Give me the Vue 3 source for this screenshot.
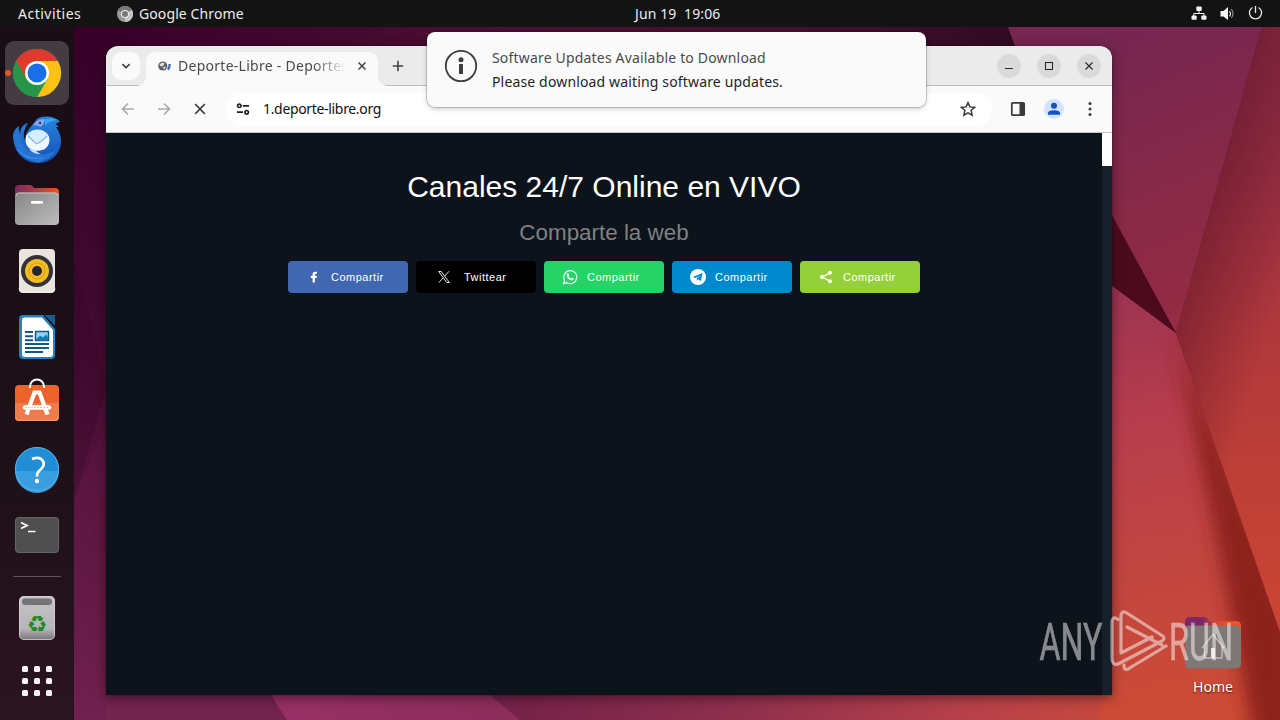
<script setup>
const shares = [
  { id: 'facebook', label: 'Compartir' },
  { id: 'x', label: 'Twittear' },
  { id: 'whatsapp', label: 'Compartir' },
  { id: 'telegram', label: 'Compartir' },
  { id: 'sharethis', label: 'Compartir' }
]
const dots = [20, 32, 44]
</script>

<template>
  <div class="desktop">
    <svg class="wallpaper" viewBox="0 0 1280 720" aria-hidden="true">
      <defs>
        <linearGradient id="wBase" x1="0" y1="0" x2="0" y2="1">
          <stop offset="0" stop-color="#340028" /><stop offset=".45" stop-color="#410a30" /><stop offset=".8" stop-color="#5f1a42" /><stop offset="1" stop-color="#752450" />
        </linearGradient>
        <linearGradient id="wTop" x1="0" y1="0" x2="1" y2="0">
          <stop offset="0" stop-color="#370029" /><stop offset=".45" stop-color="#4d0e34" /><stop offset=".8" stop-color="#43102f" /><stop offset="1" stop-color="#300a20" />
        </linearGradient>
        <linearGradient id="wRight" gradientUnits="userSpaceOnUse" x1="1080" y1="60" x2="1200" y2="340">
          <stop offset="0" stop-color="#762650" /><stop offset=".5" stop-color="#872947" /><stop offset="1" stop-color="#982b43" />
        </linearGradient>
        <linearGradient id="wEdge" gradientUnits="userSpaceOnUse" x1="0" y1="27" x2="0" y2="600">
          <stop offset="0" stop-color="#8f2e48" /><stop offset=".25" stop-color="#9a3044" /><stop offset=".55" stop-color="#b2393b" /><stop offset="1" stop-color="#c84433" />
        </linearGradient>
        <linearGradient id="wShade" gradientUnits="userSpaceOnUse" x1="1176" y1="333" x2="1262" y2="357">
          <stop offset="0" stop-color="#5a1226" stop-opacity=".5" /><stop offset="1" stop-color="#5a1226" stop-opacity="0" />
        </linearGradient>
        <linearGradient id="wLow" gradientUnits="userSpaceOnUse" x1="1120" y1="300" x2="1190" y2="700">
          <stop offset="0" stop-color="#9e3450" /><stop offset=".3" stop-color="#b73d4d" /><stop offset=".65" stop-color="#c14540" /><stop offset="1" stop-color="#cc4b36" />
        </linearGradient>
        <filter id="soft" x="-50%" y="-20%" width="200%" height="140%"><feGaussianBlur stdDeviation="9" /></filter>
        <linearGradient id="wBottom" x1="0" y1="0" x2="1" y2="0">
          <stop offset="0" stop-color="#732147" /><stop offset=".35" stop-color="#8e2f4d" /><stop offset=".7" stop-color="#b84149" /><stop offset="1" stop-color="#cc4b38" />
        </linearGradient>
        <linearGradient id="wPink" x1="0" y1="0" x2="1" y2="0">
          <stop offset="0" stop-color="#993166" /><stop offset="1" stop-color="#8d2d5a" />
        </linearGradient>
      </defs>
      <rect width="1280" height="720" fill="url(#wBase)" />
      <rect x="74" y="27" width="950" height="30" fill="url(#wTop)" />
      <path d="M74 260L106 380V420L74 500z" fill="#2a0120" opacity=".2" />
      <path d="M106 390L74 500V720H106z" fill="#6a1c4c" opacity=".3" />
      <path d="M490 690H1176V720H520z" fill="url(#wBottom)" />
      <path d="M268 690H484L520 720H287z" fill="url(#wPink)" />
      <path d="M1100 275L1176 333L1280 632V720H1100z" fill="url(#wLow)" />
      <path d="M1174 333L1300 632V760H1258L1215 530z" fill="#8d221d" filter="url(#soft)" />
      <path d="M1008 27H1262L1176 333L1020 60z" fill="url(#wRight)" />
      <path d="M1262 27H1280V632L1176 333z" fill="url(#wEdge)" />
      <path d="M1262 27H1280V632L1176 333z" fill="url(#wShade)" />
      <path d="M1100 193L1176 333L1100 277z" fill="#4b0b1d" />
    </svg>

    <header class="topbar">
      <span class="activities">Activities</span>
      <svg class="app-mark" viewBox="0 0 16 16"><circle cx="8" cy="8" r="8" fill="#989898" /><path d="M8 8L1 4A8 8 0 0 1 15 4z" fill="#777" /><path d="M8 8L15 4A8 8 0 0 1 8 16z" fill="#c4c4c4" /><circle cx="8" cy="8" r="4" fill="#eee" /><circle cx="8" cy="8" r="3" fill="#777" /></svg>
      <span class="appname">Google Chrome</span>
      <span class="clock">Jun 19&nbsp; 19:06</span>
      <div class="tray">
        <svg width="16" height="16" viewBox="0 0 16 16" fill="#f2f2f2"><rect x="5.300" y=".5" width="5.400" height="4.500" rx="1" /><rect x=".5" y="9.500" width="5.200" height="4.300" rx="1" /><rect x="10.300" y="9.500" width="5.200" height="4.300" rx="1" /><path d="M8 5v2.500M2.800 10V7.500h10.200V10" fill="none" stroke="#f2f2f2" stroke-width="1" /></svg>
        <svg width="16" height="16" viewBox="0 0 16 16"><path d="M1.500 5h3L9 1v13L4.500 10.500h-3z" fill="#f2f2f2" /><path d="M10.500 5q2 2.700 0 5.400" fill="none" stroke="#ddd" stroke-width="1.200" /><path d="M12.300 3q3.400 4.500 0 9" fill="none" stroke="#888" stroke-width="1.200" /></svg>
        <svg width="16" height="16" viewBox="0 0 16 16" fill="none" stroke="#e8e8e8" stroke-width="1.300"><path d="M5.500 1.500a6.100 6.100 0 1 0 6 0M8.500 0v7" /></svg>
      </div>
    </header>

    <nav class="dock">
      <div class="slot active"><i class="running"></i>
        <svg viewBox="0 0 64 64"><circle cx="32" cy="32" r="24" fill="#34a853" /><path d="M32 32L11.200 20A24 24 0 0 1 52.800 20z" fill="#e03a2c" /><path d="M32 20H52.800A24 24 0 0 1 32 56L42.400 38z" fill="#fbc116" /><path d="M11.200 20A24 24 0 0 0 32 56L42.400 38H21.600z" fill="#279447" /><path d="M11.200 20L21.600 38L32 20z" fill="#e03a2c" /><circle cx="32" cy="32" r="12" fill="#fff" /><circle cx="32" cy="32" r="9.500" fill="#1a6fe8" /></svg>
      </div>
      <div class="slot">
        <svg viewBox="0 0 64 64"><defs><linearGradient id="tb" x1="0" y1="0" x2="0" y2="1"><stop offset="0" stop-color="#2486dc" /><stop offset="1" stop-color="#1550ba" /></linearGradient></defs><path d="M8 28C8 43 17 56 33 56C47 56 56 46 56 34C56 29 54 24 51 20L54 20L50.500 17L55 14.500C49 9 39 8 32 12L24 22Q19 28 21 35C17 29 19 22 23 16C18 17 15 22 15 27C13 25 14 22 14 19Q9 22 8 28z" fill="url(#tb)" /><path d="M8.500 30Q11 52 33 55.500Q46 53 51 43Q40 50 28 46Q16 42 14 22Q9 24 8.500 30z" fill="#2573d4" /><path d="M12 42Q22 54 38 51" fill="none" stroke="#3f93ea" stroke-width="1.500" opacity=".7" /><path d="M28 18Q33 11.500 40 12.500Q39 17 36 20Q32 18 28 18z" fill="#8ea4ec" /><path d="M40 12.500Q46 10.500 52 13Q43 14 40 19z" fill="#3aa5ee" /><ellipse cx="32.500" cy="33" rx="12" ry="10.500" fill="#d6efff" /><path d="M21 28L32 36Q38 36 44 29V36Q42 43.500 33 43.500Q21 43 21 34z" fill="#f0f8ff" /><path d="M23 29L31 36.500Q34 37 42 29" fill="none" stroke="#8fb9dc" stroke-width="1.200" /><path d="M24 42Q28 47.500 36 47Q31 45 31 43z" fill="#c1e6fa" /><circle cx="35" cy="16" r="1.200" fill="#10377a" /></svg>
      </div>
      <div class="slot">
        <svg viewBox="0 0 64 64"><defs><linearGradient id="ff" x1="0" x2="1"><stop offset="0" stop-color="#782a62" /><stop offset="1" stop-color="#e95420" /></linearGradient><linearGradient id="fg" x1="0" y1="0" x2="1" y2="1"><stop offset="0" stop-color="#868686" /><stop offset="1" stop-color="#bdbdbd" /></linearGradient></defs><path d="M10 16Q10 12 14 12H25Q27 12 29 15H50Q54 15 54 19V34H10z" fill="url(#ff)" /><rect x="10" y="19.500" width="44" height="32.500" rx="4" fill="url(#fg)" /><path d="M11 23Q11 20 14 20H50Q53 20 53 23" fill="none" stroke="#c1c1c1" /><rect x="26" y="28" width="12" height="2.800" rx=".8" fill="#fff" /></svg>
      </div>
      <div class="slot">
        <svg viewBox="0 0 64 64"><rect x="14" y="10" width="36" height="44" rx="4" fill="#e9e4de" /><path d="M14 49.500Q14 53 18 53H46Q50 53 50 49.500" fill="none" stroke="#f6f3ef" stroke-width="1" /><circle cx="32" cy="32" r="16" fill="#343238" /><circle cx="32" cy="32" r="12" fill="#f2bd22" /><circle cx="32" cy="32" r="8" fill="none" stroke="#d99e12" /><circle cx="32" cy="32" r="5" fill="#25262d" /></svg>
      </div>
      <div class="slot">
        <svg viewBox="0 0 64 64"><path d="M18 10H38L50 24V50Q50 54 46 54H18Q14 54 14 50V14Q14 10 18 10z" fill="#2b80ba" /><path d="M39.500 10H50V21z" fill="#1c5c8f" /><path d="M19 12.500H37L48 25V49Q48 52 45 52H20Q17 52 17 49V15Q17 12.500 19 12.500z" fill="#fff" /><path d="M20 27h8M20 31.300h8M20 35.300h8M20 39h24M20 43h24M20 47h18" stroke="#155685" stroke-width="2" /><rect x="30.500" y="26.500" width="13" height="9" fill="#93d2ef" stroke="#155685" stroke-width="1.500" /><path d="M31 34.500l4-4 3 2 3-3 2 3v3H31z" fill="#187bb3" /></svg>
      </div>
      <div class="slot">
        <svg viewBox="0 0 64 64"><rect x="10" y="14" width="44" height="36" rx="4" fill="#ee622c" /><path d="M10 32H54V46Q54 50 50 50H14Q10 50 10 46z" fill="#f07a4a" /><path d="M11 46Q11 49.300 14 49.300H50Q53 49.300 53 46" fill="none" stroke="#f99a70" /><path d="M25 17V15.500A7 7 0 0 1 39 15.500V17" fill="none" stroke="#fff" stroke-width="2" /><path d="M21.500 43.500L29.500 21.500H34.500L42.500 43.500" fill="none" stroke="#fff" stroke-width="4.200" /><path d="M20 36.500H44" stroke="#fff" stroke-width="4.500" stroke-linecap="round" /><path d="M20 36.500H44" stroke="#f4a27f" stroke-width=".7" stroke-dasharray="2 1" /></svg>
      </div>
      <div class="slot">
        <svg viewBox="0 0 64 64"><circle cx="32" cy="32" r="22" fill="#208dd6" /><path d="M10 34H54A22 22 0 0 1 10 34z" fill="#389ee0" /><circle cx="32" cy="32" r="21.500" fill="none" stroke="#55b2eb" /><path d="M27 22Q32.500 19.800 36 22Q40 25 38.300 29Q37 31.500 34.500 33.500Q32 35.500 32 39.500" fill="none" stroke="#fff" stroke-width="2.700" /><circle cx="32" cy="44" r="2.200" fill="#fff" /></svg>
      </div>
      <div class="slot">
        <svg viewBox="0 0 64 64"><rect x="10" y="14" width="44" height="36" rx="4" fill="#4f4f4f" /><rect x="10.500" y="14.500" width="43" height="35" rx="3.500" fill="none" stroke="#646464" /><path d="M16 19.500L22 22.500L16 25.500" fill="none" stroke="#fff" stroke-width="1.800" /><path d="M23 28.500H30.500" stroke="#fff" stroke-width="1.500" /></svg>
      </div>
      <hr class="sep">
      <div class="slot trash">
        <svg viewBox="0 0 64 64"><defs><linearGradient id="tr" x1="0" y1="0" x2="0" y2="1"><stop offset="0" stop-color="#c5c4c5" /><stop offset=".75" stop-color="#b7b4b7" /><stop offset="1" stop-color="#777478" /></linearGradient></defs><rect x="14" y="10" width="36" height="44" rx="5" fill="url(#tr)" /><rect x="14.500" y="10.500" width="35" height="43" rx="4.500" fill="none" stroke="#d9d7d9" stroke-opacity=".7" /><rect x="17" y="12.500" width="30" height="6.500" rx="3" fill="#757375" /><text x="32" y="45.500" text-anchor="middle" class="recycle">♻</text></svg>
      </div>
      <div class="slot apps">
        <svg viewBox="0 0 64 64" fill="#f8f4f7"><template v-for="y in dots" :key="y"><rect v-for="x in dots" :key="x" :x="x - 3" :y="y - 3" width="6" height="6" rx="1.500" /></template></svg>
      </div>
    </nav>

    <section class="window">
      <div class="tabstrip">
        <div class="tabsearch"><svg width="10" height="10" viewBox="0 0 10 10"><path d="M1.300 3.200L5 6.600L8.700 3.200" fill="none" stroke="#444" stroke-width="1.700" /></svg></div>
        <div class="tab">
          <svg class="favicon" width="16" height="16" viewBox="0 0 16 16"><circle cx="5.800" cy="8" r="4.600" fill="#5f6368" /><path d="M2.500 7Q4 4 7.500 5L6.500 7.500 4 8.500zM5 9.800L8.800 8.500 8 11z" fill="#dfe3e6" /><path d="M12.700 6Q12.700 10 10.800 11.700" fill="none" stroke="#3d68b3" stroke-width="2.300" /></svg>
          <span class="tabtitle">Deporte-Libre - Deportes</span>
          <svg class="tabclose" width="10" height="10" viewBox="0 0 10 10"><path d="M1.500 1.500l7 7M8.500 1.500l-7 7" stroke="#444" stroke-width="1.500" /></svg>
        </div>
        <svg class="newtab" width="12" height="12" viewBox="0 0 12 12"><path d="M6 .8v10.400M.8 6h10.400" stroke="#444" stroke-width="1.600" /></svg>
        <div class="controls">
          <span><svg viewBox="0 0 24 24"><path d="M8 14.500h8" stroke="#2c2c2c" stroke-width="1.100" /></svg></span>
          <span><svg viewBox="0 0 24 24"><rect x="8.500" y="8.500" width="7" height="7" fill="none" stroke="#2c2c2c" stroke-width="1.100" /></svg></span>
          <span><svg viewBox="0 0 24 24"><path d="M8.500 8.500l7 7M15.500 8.500l-7 7" stroke="#2c2c2c" stroke-width="1.200" /></svg></span>
        </div>
      </div>

      <div class="toolbar">
        <svg class="nav" width="14" height="14" viewBox="0 0 14 14"><path d="M13 7H2M7 1.500L1.500 7L7 12.500" fill="none" stroke="#a9a9a9" stroke-width="1.600" /></svg>
        <svg class="nav" width="14" height="14" viewBox="0 0 14 14"><path d="M1 7H12M7 1.500L12.500 7L7 12.500" fill="none" stroke="#a9a9a9" stroke-width="1.600" /></svg>
        <svg class="nav" width="14" height="14" viewBox="0 0 14 14"><path d="M2.200 2.200l9.600 9.600M11.800 2.200l-9.600 9.600" stroke="#444" stroke-width="1.700" /></svg>
        <div class="omnibox">
          <svg width="14" height="14" viewBox="0 0 14 14" fill="none" stroke="#222" stroke-width="1.700"><circle cx="3.300" cy="3.800" r="1.700" /><path d="M6.700 3.800H13M1 10.200H7" /><circle cx="10.700" cy="10.200" r="1.700" /></svg>
          <span class="url">1.deporte-libre.org</span>
          <svg class="star" width="16" height="16" viewBox="0 0 16 16"><path d="M8 1.600l1.900 4.300 4.700.5-3.500 3.100 1 4.700L8 11.800l-4.100 2.400 1-4.700L1.400 6.400l4.700-.5z" fill="none" stroke="#3c3c3c" stroke-width="1.500" /></svg>
        </div>
        <svg class="panel" width="16" height="16" viewBox="0 0 16 16"><rect x="1.800" y="1.800" width="12.400" height="12.400" rx="1" fill="none" stroke="#3a3a3a" stroke-width="1.700" /><path d="M9.500 2h5v12h-5z" fill="#3a3a3a" /></svg>
        <svg class="person" width="20" height="20" viewBox="0 0 20 20"><circle cx="10" cy="10" r="10" fill="#d3e3fd" /><circle cx="10" cy="6.800" r="3" fill="#1254bd" /><path d="M4 15.700v-1.500Q4 11.200 10 11.200t6 3v1.500z" fill="#1254bd" /></svg>
        <svg class="menu" width="4" height="16" viewBox="0 0 4 16" fill="#3a3a3a"><circle cx="2" cy="2.500" r="1.500" /><circle cx="2" cy="8" r="1.500" /><circle cx="2" cy="13.500" r="1.500" /></svg>
      </div>

      <div class="viewport">
        <main class="page">
          <h1>Canales 24/7 Online en VIVO</h1>
          <h2>Comparte la web</h2>
          <div class="shares">
            <div v-for="s in shares" :key="s.id" class="share" :class="s.id">
              <svg v-if="s.id === 'facebook'" viewBox="0 0 16 16"><path d="M6.600 13.500V8.900H4.800V6.700h1.800V5.500Q6.600 2.700 9.200 2.700H11v2.100H9.900Q8.900 4.800 8.900 5.700v1h2l-.3 2.200H8.900v4.600z" fill="#fff" /></svg>
              <svg v-else-if="s.id === 'x'" viewBox="0 0 16 16" fill="none" stroke="#fff" stroke-width=".9"><path d="M2.700 2.500H5.200L13.300 13.500H10.800z" /><path d="M13 2.300L8.700 7.200M7.200 8.800L2.800 13.700" /></svg>
              <svg v-else-if="s.id === 'whatsapp'" viewBox="0 0 16 16"><path d="M1.500 14.700l1.100-3.500A6.500 6.500 0 1 1 5 13.700z" fill="none" stroke="#fff" stroke-width="1.200" /><path d="M4.900 4.800q.8-1.100 1.500-.3l.8 1.700-.8 1.100q.8 1.600 2.500 2.400l1-1.100 1.900.9q-.1 2-2 2Q5.200 10.500 4.700 6.500z" fill="#fff" /></svg>
              <svg v-else-if="s.id === 'telegram'" viewBox="0 0 16 16"><circle cx="8" cy="8" r="8" fill="#fff" /><path d="M2.700 7.900L12.500 4L10.900 12.200L8.200 10.200L6.800 11.500V9.300L10.600 5.900L5.700 9z" fill="#0088cc" /></svg>
              <svg v-else viewBox="0 0 16 16" fill="#fff"><path d="M12 3.800L4 8L12 12.200" fill="none" stroke="#fff" stroke-width="1.300" /><circle cx="12" cy="3.800" r="2" /><circle cx="4" cy="8" r="2" /><circle cx="12" cy="12.300" r="2" /></svg>
              <span>{{ s.label }}</span>
            </div>
          </div>
        </main>
        <div class="scrollbar"><div class="thumb"></div></div>
      </div>
    </section>

    <aside class="notice">
      <svg width="34" height="34" viewBox="0 0 34 34"><circle cx="17" cy="17" r="15.200" fill="none" stroke="#3d3d3d" stroke-width="1.800" /><circle cx="17" cy="10.800" r="2.500" fill="#3d3d3d" /><rect x="15" y="15" width="4" height="10" fill="#3d3d3d" /></svg>
      <div class="message">
        <div class="subject">Software Updates Available to Download</div>
        <div class="body">Please download waiting software updates.</div>
      </div>
    </aside>

    <div class="home">
      <svg width="56" height="52" viewBox="0 0 56 52"><defs><linearGradient id="hf" x1="0" x2="1"><stop offset="0" stop-color="#7b2765" /><stop offset=".3" stop-color="#7b2765" /><stop offset=".6" stop-color="#d94b2a" /><stop offset="1" stop-color="#f0541f" /></linearGradient></defs><path d="M0 5Q0 0 5 0H19Q22 0 25 4H51Q56 4 56 9V26H0z" fill="url(#hf)" /><rect y="8.500" width="56" height="43" rx="4.500" fill="#7e7776" /><path d="M17 31L28 17.500L39 31M19.500 29V41H37V29" fill="none" stroke="#c1bbb9" stroke-width="1.500" /><rect x="26" y="31" width="4" height="10" fill="#e6e2e1" /></svg>
      <span>Home</span>
    </div>

    <svg class="watermark" viewBox="0 0 240 70" aria-label="ANY RUN">
      <g class="wm"><text x="3.500" y="53.500" textLength="63" lengthAdjust="spacingAndGlyphs">ANY</text><text x="133" y="53.500" textLength="64" lengthAdjust="spacingAndGlyphs">RUN</text></g>
      <path d="M82 13.500Q76 9 76 17V53Q77 61 84 57L126 35Q130 32 126 29.500L90 6.500Q85 4 85 11V47L116 31M91 21L126 39M92 63L130 40M88 59Q88 66 94 62" class="mark" />
    </svg>
  </div>
</template>

<style>
html, body { margin: 0; overflow: hidden; }
</style>

<style scoped>
.desktop { position: relative; width: 1280px; height: 720px; overflow: hidden; font-family: "Noto Sans", "Open Sans", sans-serif; font-size: 14px; }
.wallpaper { position: absolute; inset: 0; width: 1280px; height: 720px; }
svg { display: block; flex: none; }
.topbar { position: relative; height: 27px; box-sizing: border-box; background: #131313; color: #ededed; display: flex; align-items: center; padding: 0 17px 0 18px; line-height: 27px; white-space: nowrap; }
.activities { width: 99px; letter-spacing: .5px; }
.app-mark { width: 16px; height: 16px; margin-right: 6px; }
.appname { width: 496px; letter-spacing: .1px; }
.clock { letter-spacing: .12px; }
.tray { margin-left: auto; display: flex; gap: 12px; }
.dock { position: absolute; left: 0; top: 27px; width: 74px; height: 693px; box-sizing: border-box; padding: 14px 5px 0; display: flex; flex-direction: column; gap: 2px; background: linear-gradient(#190d16, #1d1017 60%, #2a1420); }
.slot { position: relative; width: 64px; height: 64px; flex: none; border-radius: 9px; }
.slot svg { width: 64px; height: 64px; }
.active { background: #453c43; }
.running { position: absolute; left: 0; top: 29px; width: 6px; height: 6px; border-radius: 50%; background: #e95420; }
.sep { width: 48px; height: 1px; border: 0; background: #5e535a; margin: 7px 8px 7px; flex: none; }
.recycle { font-family: "DejaVu Sans", sans-serif; font-size: 23px; fill: #248b22; }
.apps { margin-top: -3px; }
.window { position: absolute; left: 106px; top: 46px; width: 1006px; height: 649px; display: flex; flex-direction: column; border-radius: 12px 12px 0 0; overflow: hidden; background: #0d131b; box-shadow: 0 3px 12px rgba(20, 0, 15, .5), 0 0 1px rgba(0, 0, 0, .7); }
.tabstrip { height: 39px; border-bottom: 1px solid #bebebe; background: #ebebeb; display: flex; align-items: center; padding: 0 11px 0 6px; flex: none; }
.tabsearch { width: 28px; height: 28px; border-radius: 9px; background: #fafafa; display: flex; align-items: center; justify-content: center; }
.tab { width: 232px; height: 34px; box-sizing: border-box; margin: 6px 0 -1px 6px; padding: 0 11px 6px; border-radius: 9px 9px 0 0; background: #fafafa; display: flex; align-items: center; position: relative; }
.tab::before, .tab::after { content: ""; position: absolute; bottom: 0; width: 9px; height: 9px; }
.tab::before { left: -9px; background: radial-gradient(circle at 0 0, transparent 8.500px, #fafafa 9px); }
.tab::after { right: -9px; background: radial-gradient(circle at 100% 0, transparent 8.500px, #fafafa 9px); }
.tabtitle { width: 168px; overflow: hidden; white-space: nowrap; margin-left: 5px; position: relative; top: -1px; color: #4a4a4a; letter-spacing: .27px; -webkit-mask-image: linear-gradient(90deg, #000 135px, transparent 168px); mask-image: linear-gradient(90deg, #000 135px, transparent 168px); }
.tabclose { margin-left: 11px; }
.newtab { margin-left: 14px; }
.controls { margin-left: auto; display: flex; gap: 16px; }
.controls span, .controls svg { width: 24px; height: 24px; }
.controls span { border-radius: 50%; background: #dadada; }
.toolbar { height: 46px; border-bottom: 1px solid #c5c5c5; background: #fafafa; display: flex; align-items: center; padding-left: 15px; flex: none; }
.nav { margin-right: 22px; }
.omnibox { width: 766px; height: 33px; box-sizing: border-box; border-radius: 17px; background: #fff; display: flex; align-items: center; padding: 0 16px 0 10px; margin-left: -3px; color: #111; }
.url { margin: -2px 0 0 13px; letter-spacing: -.33px; }
.star { margin-left: auto; }
.panel { margin-left: 18px; }
.person { margin-left: 18px; }
.menu { margin-left: 24px; }
.viewport { flex: 1; display: flex; min-height: 0; }
.page { flex: 1; font-family: "Liberation Sans", Arial, sans-serif; text-align: center; background: #0d131b; }
h1 { margin: 36px 0 0; font-size: 30px; line-height: 36px; font-weight: 400; color: #fff; }
h2 { margin: 14px 0 0; font-size: 22.4px; line-height: 27px; font-weight: 400; color: #808080; }
.shares { display: flex; justify-content: center; gap: 8px; margin-top: 15px; }
.share { width: 120px; height: 32px; box-sizing: border-box; padding-left: 18px; border-radius: 4px; display: flex; align-items: center; gap: 9px; color: #fff; font-size: 11px; letter-spacing: .5px; }
.share svg { width: 16px; height: 16px; }
.facebook { background: #4267b2; }
.x { background: #000; padding-left: 20px; gap: 12px; }
.whatsapp { background: #25d366; }
.telegram { background: #0088cc; }
.sharethis { background: #95d03a; }
.scrollbar { width: 10px; background: #15202a; }
.thumb { height: 33px; background: #fff; }
.notice { position: absolute; left: 427px; top: 32px; width: 499px; height: 75px; border-radius: 8px; background: #fafafa; box-shadow: 0 0 0 1px rgba(0, 0, 0, .16), 0 2px 5px rgba(0, 0, 0, .2); display: flex; }
.notice svg { margin: 17px 0 0 17px; }
.message { margin: 14px 0 0 14px; line-height: 24px; white-space: nowrap; }
.subject { color: #4a4a4a; letter-spacing: .18px; }
.body { color: #242424; letter-spacing: .15px; }
.home { position: absolute; left: 1173px; top: 617px; width: 80px; display: flex; flex-direction: column; align-items: center; gap: 8px; color: #fff; line-height: 20px; text-shadow: 0 1px 2px rgba(0, 0, 0, .7); }
.watermark { position: absolute; left: 1036px; top: 606px; width: 240px; height: 70px; opacity: .5; }
.wm { font-family: Roboto, sans-serif; font-size: 52px; fill: #fff; stroke: #fff; stroke-width: .6px; }
.mark { fill: none; stroke: #fff; stroke-width: 3.200px; stroke-linejoin: round; stroke-linecap: round; }
</style>
